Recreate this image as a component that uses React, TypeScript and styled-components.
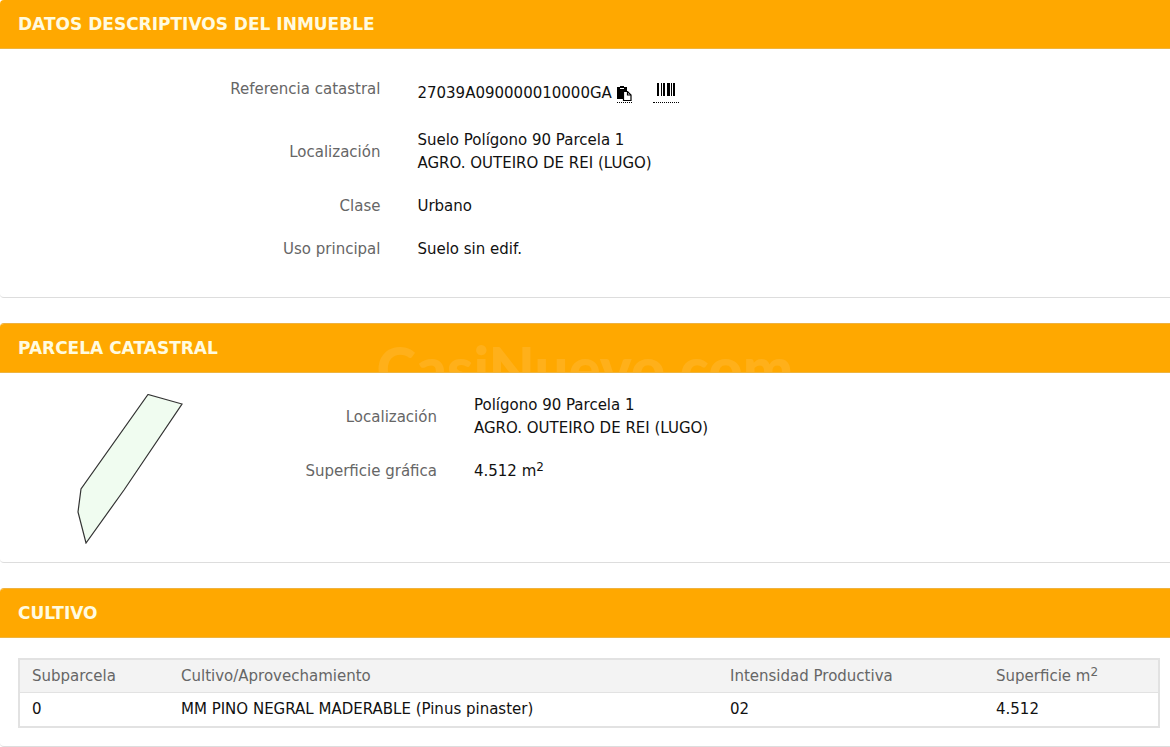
import React from "react";
import styled, { createGlobalStyle } from "styled-components";

const GlobalStyle = createGlobalStyle`
  *, *::before, *::after { box-sizing: border-box; }
  body {
    margin: 0;
    background: #fff;
    color: #111;
    font-family: Verdana, "DejaVu Sans", sans-serif;
    font-size: 15px;
    line-height: 23px;
  }
  sup { font-size: 12px; line-height: 0; vertical-align: 5px; }
`;

const Page = styled.main`
  display: flex;
  flex-direction: column;
  gap: 25px;
`;

const Panel = styled.section<{ $first?: boolean }>`
  border: 1px solid #ddd;
  border-width: ${(p) => (p.$first ? "0 0 1px" : "1px 0 1px")};
  border-top-color: #efb240;
  border-radius: 4px 0 0 4px;
  overflow: hidden;
`;

const PanelHeader = styled.header`
  position: relative;
  overflow: hidden;
  padding: 13px 18px 12px;
  background: #ffa800;
  border-bottom: 1px solid #eeb440;
`;

const PanelTitle = styled.h2`
  margin: 0;
  color: #fffbe0;
  font-size: 17px;
  line-height: 23px;
  font-weight: 700;
`;

const Watermark = styled.span`
  position: absolute;
  top: 14px;
  left: 50%;
  transform: translateX(-50%);
  color: rgba(255, 255, 255, 0.1);
  font-family: Lato, sans-serif;
  font-size: 60px;
  line-height: 60px;
  font-weight: 900;
  white-space: nowrap;
  pointer-events: none;
`;

const PanelBody = styled.div<{ $size?: "tall" | "map" }>`
  display: flex;
  padding: ${(p) => (p.$size === "map" ? 21 : 20)}px 10px
    ${(p) => (p.$size === "tall" ? 36 : 18)}px 18px;
`;

const Fields = styled.dl`
  flex: 1;
  display: flex;
  flex-direction: column;
  gap: 20px;
  margin: 0;
`;

const Field = styled.div<{ $label: string; $tall?: boolean }>`
  display: grid;
  grid-template-columns: ${(p) => p.$label} 1fr;
  column-gap: 37px;
  align-items: center;
  min-height: ${(p) => (p.$tall ? 40 : 23)}px;
`;

const Label = styled.dt`
  color: #666;
  text-align: right;
`;

const Value = styled.dd`
  margin: 0;
`;

const Reference = styled(Value)`
  display: flex;
  align-items: flex-end;
  padding-top: 8px;
`;

const IconButton = styled.button<{ $gap: number; $pad: number }>`
  display: flex;
  margin: 0 0 2px ${(p) => p.$gap}px;
  padding: 0 ${(p) => p.$pad}px;
  border: 0;
  border-bottom: 1px dotted #000;
  background: none;
  color: #000;
  cursor: pointer;
`;

const ParcelMap = styled.svg`
  display: block;
  flex: none;
  width: 203px;
  height: 150px;
`;

const Table = styled.table`
  width: 100%;
  table-layout: fixed;
  border: 2px solid #e2e2e2;
  border-spacing: 0;
  text-align: left;
`;

const HeadCell = styled.th`
  height: 33px;
  padding: 5px 12px 4px;
  background: #f3f3f3;
  border-bottom: 1px solid #e2e2e2;
  color: #666;
  font-weight: 400;
`;

const Cell = styled.td`
  height: 33px;
  padding: 5px 12px;
`;

const CopyIcon = () => (
  <svg width="15" height="17" viewBox="0 0 15 17" aria-hidden="true">
    <path d="M0 2h3V1h4v1h3v4H6v8H0z" fill="currentColor" />
    <path d="M3 3.500h4" stroke="#fff" strokeWidth="1" />
    <path d="M6.500 6.500h4l3.500 3.500v5.500H6.500z" fill="#fff" stroke="currentColor" strokeWidth="1.200" />
    <path d="M10.500 6.500V10H14" fill="none" stroke="currentColor" strokeWidth="1.200" />
  </svg>
);

const BarcodeIcon = () => (
  <svg width="18" height="20" viewBox="0 0 18 20" aria-hidden="true">
    <path d="M0 1h2v13H0zM4 1h1v13H4zM6 1h2v13H6zM10 1h3v13h-3zM14 1h1v13h-1zM16 1h2v13h-2z" fill="currentColor" />
  </svg>
);

const columns = [
  { name: <>Subparcela</>, width: "149px" },
  { name: <>Cultivo/Aprovechamiento</>, width: "auto" },
  { name: <>Intensidad Productiva</>, width: "266px" },
  { name: <>Superficie m<sup>2</sup></>, width: "174px" },
];

const crops = [["0", "MM PINO NEGRAL MADERABLE (Pinus pinaster)", "02", "4.512"]];

const mainLabel = "calc(32% - 3px)";

export default function App() {
  return (
    <>
      <GlobalStyle />
      <Page>
        <Panel $first>
          <PanelHeader>
            <PanelTitle>DATOS DESCRIPTIVOS DEL INMUEBLE</PanelTitle>
          </PanelHeader>
          <PanelBody $size="tall">
            <Fields>
              <Field $label={mainLabel} $tall>
                <Label>Referencia catastral</Label>
                <Reference>
                  27039A090000010000GA
                  <IconButton $gap={5} $pad={0} type="button" aria-label="Copiar referencia">
                    <CopyIcon />
                  </IconButton>
                  <IconButton $gap={21} $pad={4} type="button" aria-label="Código de barras">
                    <BarcodeIcon />
                  </IconButton>
                </Reference>
              </Field>
              <Field $label={mainLabel}>
                <Label>Localización</Label>
                <Value>Suelo Polígono 90 Parcela 1<br />AGRO. OUTEIRO DE REI (LUGO)</Value>
              </Field>
              <Field $label={mainLabel}>
                <Label>Clase</Label>
                <Value>Urbano</Value>
              </Field>
              <Field $label={mainLabel}>
                <Label>Uso principal</Label>
                <Value>Suelo sin edif.</Value>
              </Field>
            </Fields>
          </PanelBody>
        </Panel>

        <Panel>
          <PanelHeader>
            <PanelTitle>PARCELA CATASTRAL</PanelTitle>
            <Watermark>CasiNuevo.com</Watermark>
          </PanelHeader>
          <PanelBody $size="map">
            <ParcelMap viewBox="0 0 203 150" role="img" aria-label="Plano de la parcela">
              <path
                d="M130 0.500L164 10L106 96L68 149L60 118L63 95Z"
                fill="#f0fcf0"
                stroke="#333"
                strokeWidth="1.200"
              />
            </ParcelMap>
            <Fields>
              <Field $label="23%">
                <Label>Localización</Label>
                <Value>Polígono 90 Parcela 1<br />AGRO. OUTEIRO DE REI (LUGO)</Value>
              </Field>
              <Field $label="23%">
                <Label>Superficie gráfica</Label>
                <Value>4.512 m<sup>2</sup></Value>
              </Field>
            </Fields>
          </PanelBody>
        </Panel>

        <Panel>
          <PanelHeader>
            <PanelTitle>CULTIVO</PanelTitle>
          </PanelHeader>
          <PanelBody>
            <Table>
              <colgroup>
                {columns.map((c, i) => <col key={i} style={{ width: c.width }} />)}
              </colgroup>
              <thead>
                <tr>{columns.map((c, i) => <HeadCell key={i} scope="col">{c.name}</HeadCell>)}</tr>
              </thead>
              <tbody>
                {crops.map((row) => (
                  <tr key={row[0]}>{row.map((v, i) => <Cell key={i}>{v}</Cell>)}</tr>
                ))}
              </tbody>
            </Table>
          </PanelBody>
        </Panel>
      </Page>
    </>
  );
}
